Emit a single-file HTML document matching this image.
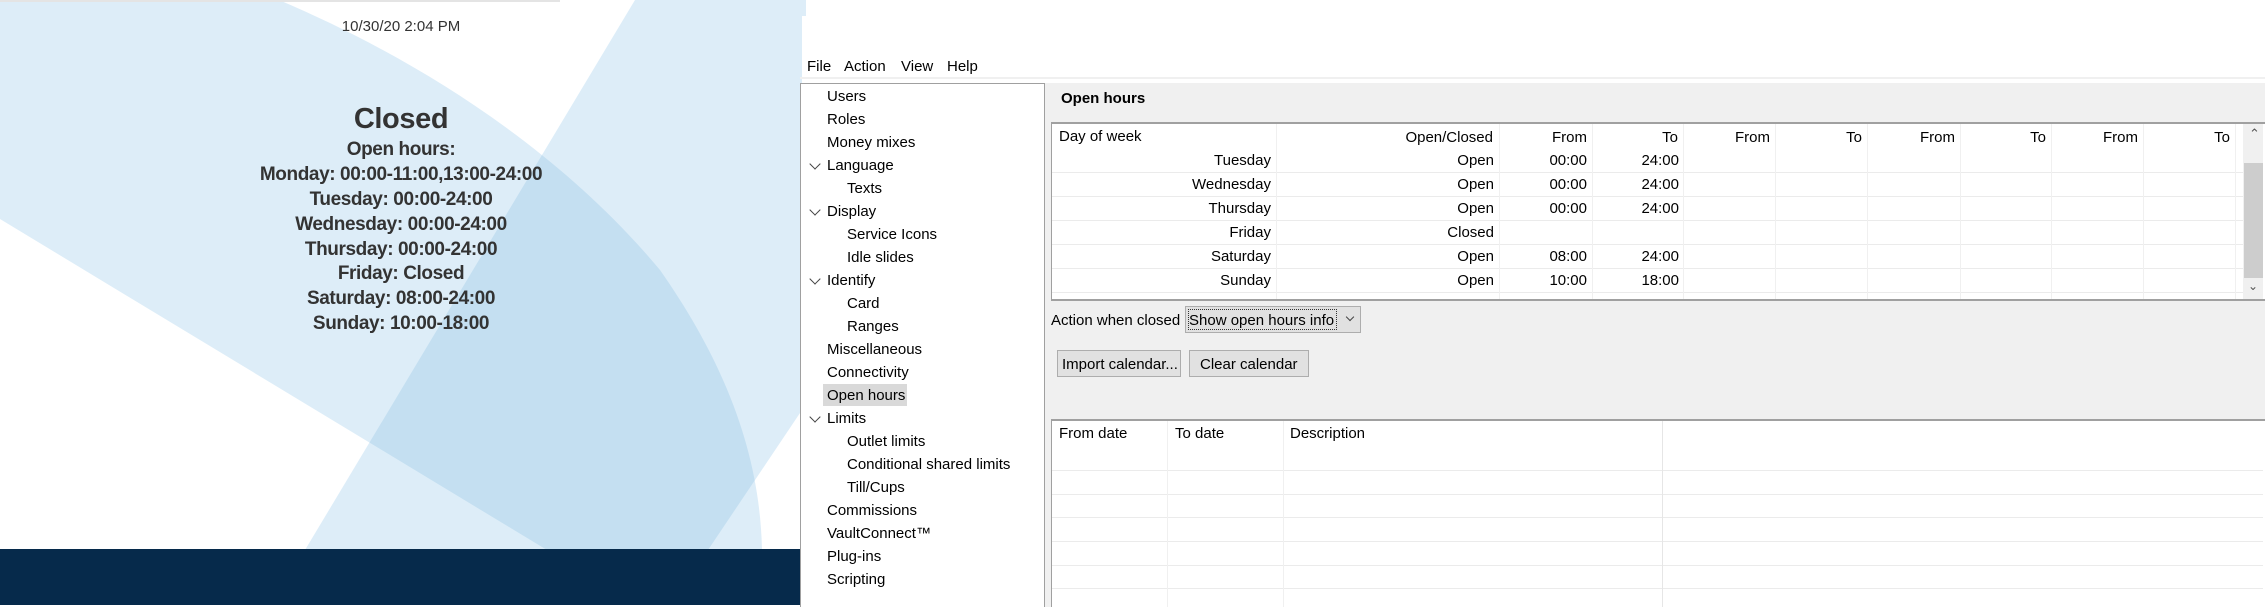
<!DOCTYPE html>
<html><head><meta charset="utf-8"><style>
*{margin:0;padding:0;box-sizing:border-box}
body{width:2265px;height:607px;position:relative;overflow:hidden;background:#fff;font-family:"Liberation Sans",sans-serif}
.a{position:absolute;white-space:nowrap}
.lt{color:#333;font-size:19px;font-weight:bold;letter-spacing:-0.4px;width:802px;left:0;text-align:center;transform:scaleX(1.0)}
.ui{font-size:15px;color:#000}
.tr{position:absolute;font-size:15px;color:#000;line-height:20px}
.chev{position:absolute;width:8px;height:8px;border-right:1.5px solid #444;border-bottom:1.5px solid #444;transform:rotate(45deg)}
.cell{position:absolute;font-size:15px;text-align:right;line-height:24px}
.vl{position:absolute;width:1px;background:#f0f0f0}
.hl{position:absolute;height:1px;background:#ebebeb}
</style></head><body>
<svg class="a" style="left:0;top:0" width="802" height="550">
<rect width="802" height="550" fill="#fff"/>
<path d="M0 0 L279 0 C420 60 560 150 660 270 C730 370 760 460 762 550 L547 550 L0 219 Z" fill="#ddedf8"/>
<path d="M635 0 L802 0 L802 410 L708 550 L305 550 Z" fill="#ddedf8"/>
<clipPath id="c"><path d="M635 0 L802 0 L802 410 L708 550 L305 550 Z"/></clipPath>
<path clip-path="url(#c)" d="M0 0 L279 0 C420 60 560 150 660 270 C730 370 760 460 762 550 L547 550 L0 219 Z" fill="#c4dff1"/>
<rect x="0" y="0" width="560" height="2" fill="#e4e4e4"/>
</svg>
<div class="a" style="left:0;top:549px;width:802px;height:56px;background:#062a4b"></div>
<div class="a" style="left:0;top:18px;width:802px;text-align:center;font-size:15px;color:#333">10/30/20 2:04 PM</div>
<div class="a lt" style="top:103px;font-size:29px;font-weight:bold">Closed</div>
<div class="a lt" style="top:139px">Open hours:</div>
<div class="a lt" style="top:164px">Monday: 00:00-11:00,13:00-24:00</div>
<div class="a lt" style="top:189px">Tuesday: 00:00-24:00</div>
<div class="a lt" style="top:214px">Wednesday: 00:00-24:00</div>
<div class="a lt" style="top:239px">Thursday: 00:00-24:00</div>
<div class="a lt" style="top:263px">Friday: Closed</div>
<div class="a lt" style="top:288px">Saturday: 08:00-24:00</div>
<div class="a lt" style="top:313px">Sunday: 10:00-18:00</div>

<div class="a" style="left:800px;top:0;width:6px;height:16px;background:#ddedf8"></div>
<div class="a ui" style="left:807px;top:58px">File</div>
<div class="a ui" style="left:844px;top:58px">Action</div>
<div class="a ui" style="left:901px;top:58px">View</div>
<div class="a ui" style="left:947px;top:58px">Help</div>
<div class="a" style="left:800px;top:77px;width:1465px;height:2px;background:#f0f0f0"></div>

<div class="a" style="left:800px;top:83px;width:245px;height:524px;border:1px solid #a0a0a0;border-bottom:none;background:#fff"></div>
<div class="a" style="left:823px;top:384px;width:84px;height:22px;background:#d9d9d9"></div>
<div class="tr" style="left:827px;top:87px">Users</div>
<div class="tr" style="left:827px;top:110px">Roles</div>
<div class="tr" style="left:827px;top:133px">Money mixes</div>
<div class="chev" style="left:811px;top:160px"></div><div class="tr" style="left:827px;top:156px">Language</div>
<div class="tr" style="left:847px;top:179px">Texts</div>
<div class="chev" style="left:811px;top:206px"></div><div class="tr" style="left:827px;top:202px">Display</div>
<div class="tr" style="left:847px;top:225px">Service Icons</div>
<div class="tr" style="left:847px;top:248px">Idle slides</div>
<div class="chev" style="left:811px;top:275px"></div><div class="tr" style="left:827px;top:271px">Identify</div>
<div class="tr" style="left:847px;top:294px">Card</div>
<div class="tr" style="left:847px;top:317px">Ranges</div>
<div class="tr" style="left:827px;top:340px">Miscellaneous</div>
<div class="tr" style="left:827px;top:363px">Connectivity</div>
<div class="tr" style="left:827px;top:386px">Open hours</div>
<div class="chev" style="left:811px;top:413px"></div><div class="tr" style="left:827px;top:409px">Limits</div>
<div class="tr" style="left:847px;top:432px">Outlet limits</div>
<div class="tr" style="left:847px;top:455px">Conditional shared limits</div>
<div class="tr" style="left:847px;top:478px">Till/Cups</div>
<div class="tr" style="left:827px;top:501px">Commissions</div>
<div class="tr" style="left:827px;top:524px">VaultConnect™</div>
<div class="tr" style="left:827px;top:547px">Plug-ins</div>
<div class="tr" style="left:827px;top:570px">Scripting</div>

<div class="a" style="left:1045px;top:83px;width:1220px;height:524px;background:#f0f0f0"></div>
<div class="a" style="left:1061px;top:90px;font-size:15px;font-weight:bold">Open hours</div>

<div class="a" style="left:1051px;top:122px;width:1214px;height:179px;background:#fff;border-top:2px solid #a0a0a0;border-bottom:2px solid #a0a0a0;border-left:1px solid #a0a0a0"></div>
<div class="hl" style="left:1052px;top:172px;width:1191px"></div>
<div class="hl" style="left:1052px;top:196px;width:1191px"></div>
<div class="hl" style="left:1052px;top:220px;width:1191px"></div>
<div class="hl" style="left:1052px;top:244px;width:1191px"></div>
<div class="hl" style="left:1052px;top:268px;width:1191px"></div>
<div class="hl" style="left:1052px;top:292px;width:1191px"></div>
<div class="vl" style="left:1276px;top:124px;height:175px"></div>
<div class="vl" style="left:1499px;top:124px;height:175px"></div>
<div class="vl" style="left:1592px;top:124px;height:175px"></div>
<div class="vl" style="left:1683px;top:124px;height:175px"></div>
<div class="vl" style="left:1775px;top:124px;height:175px"></div>
<div class="vl" style="left:1867px;top:124px;height:175px"></div>
<div class="vl" style="left:1960px;top:124px;height:175px"></div>
<div class="vl" style="left:2051px;top:124px;height:175px"></div>
<div class="vl" style="left:2143px;top:124px;height:175px"></div>
<div class="vl" style="left:2235px;top:124px;height:175px"></div>
<div class="a" style="left:2243px;top:124px;width:20px;height:175px;background:#f0f0f0"></div>
<div class="a" style="left:2244px;top:163px;width:19px;height:115px;background:#cdcdcd"></div>
<div class="a" style="left:2249px;top:126px;font-size:13px;color:#555">&#8963;</div>
<div class="a" style="left:2248px;top:279px;font-size:12px;color:#555">&#8964;</div>

<div class="a" style="left:1059px;top:128px;font-size:15px">Day of week</div>
<div class="cell" style="left:1276px;width:217px;top:126px">Open/Closed</div>
<div class="cell" style="left:1499px;width:88px;top:126px">From</div>
<div class="cell" style="left:1592px;width:86px;top:126px">To</div>
<div class="cell" style="left:1683px;width:87px;top:126px">From</div>
<div class="cell" style="left:1775px;width:87px;top:126px">To</div>
<div class="cell" style="left:1867px;width:88px;top:126px">From</div>
<div class="cell" style="left:1960px;width:86px;top:126px">To</div>
<div class="cell" style="left:2051px;width:87px;top:126px">From</div>
<div class="cell" style="left:2143px;width:87px;top:126px">To</div>

<div class="cell" style="left:1052px;width:219px;top:149px">Tuesday<br>Wednesday<br>Thursday<br>Friday<br>Saturday<br>Sunday</div>
<div class="cell" style="left:1276px;width:218px;top:149px">Open<br>Open<br>Open<br>Closed<br>Open<br>Open</div>
<div class="cell" style="left:1499px;width:88px;top:149px">00:00<br>00:00<br>00:00<br>&nbsp;<br>08:00<br>10:00</div>
<div class="cell" style="left:1592px;width:87px;top:149px">24:00<br>24:00<br>24:00<br>&nbsp;<br>24:00<br>18:00</div>

<div class="a ui" style="left:1051px;top:312px">Action when closed</div>
<div class="a" style="left:1185px;top:306px;width:176px;height:27px;background:#e1e1e1;border:1px solid #adadad"></div>
<div class="a" style="left:1188px;top:309px;width:149px;height:21px;border:1px dotted #333"></div>
<div class="a ui" style="left:1189px;top:312px">Show open hours info</div>
<div class="chev" style="left:1347px;top:314px;width:6px;height:6px;border-width:1px"></div>
<div class="a" style="left:1057px;top:350px;width:124px;height:27px;background:#e1e1e1;border:1px solid #adadad"></div>
<div class="a ui" style="left:1062px;top:356px">Import calendar...</div>
<div class="a" style="left:1189px;top:350px;width:120px;height:27px;background:#e1e1e1;border:1px solid #adadad"></div>
<div class="a ui" style="left:1200px;top:356px">Clear calendar</div>

<div class="a" style="left:1051px;top:419px;width:1214px;height:188px;background:#fff;border-top:2px solid #a0a0a0;border-left:1px solid #a0a0a0"></div>
<div class="hl" style="left:1052px;top:470px;width:1211px"></div>
<div class="hl" style="left:1052px;top:494px;width:1211px"></div>
<div class="hl" style="left:1052px;top:517px;width:1211px"></div>
<div class="hl" style="left:1052px;top:541px;width:1211px"></div>
<div class="hl" style="left:1052px;top:565px;width:1211px"></div>
<div class="hl" style="left:1052px;top:588px;width:1211px"></div>
<div class="vl" style="left:1167px;top:421px;height:186px"></div>
<div class="vl" style="left:1283px;top:421px;height:186px"></div>
<div class="vl" style="left:1662px;top:421px;height:186px;background:#e6e6e6"></div>
<div class="a ui" style="left:1059px;top:425px">From date</div>
<div class="a ui" style="left:1175px;top:425px">To date</div>
<div class="a ui" style="left:1290px;top:425px">Description</div>
</body></html>
